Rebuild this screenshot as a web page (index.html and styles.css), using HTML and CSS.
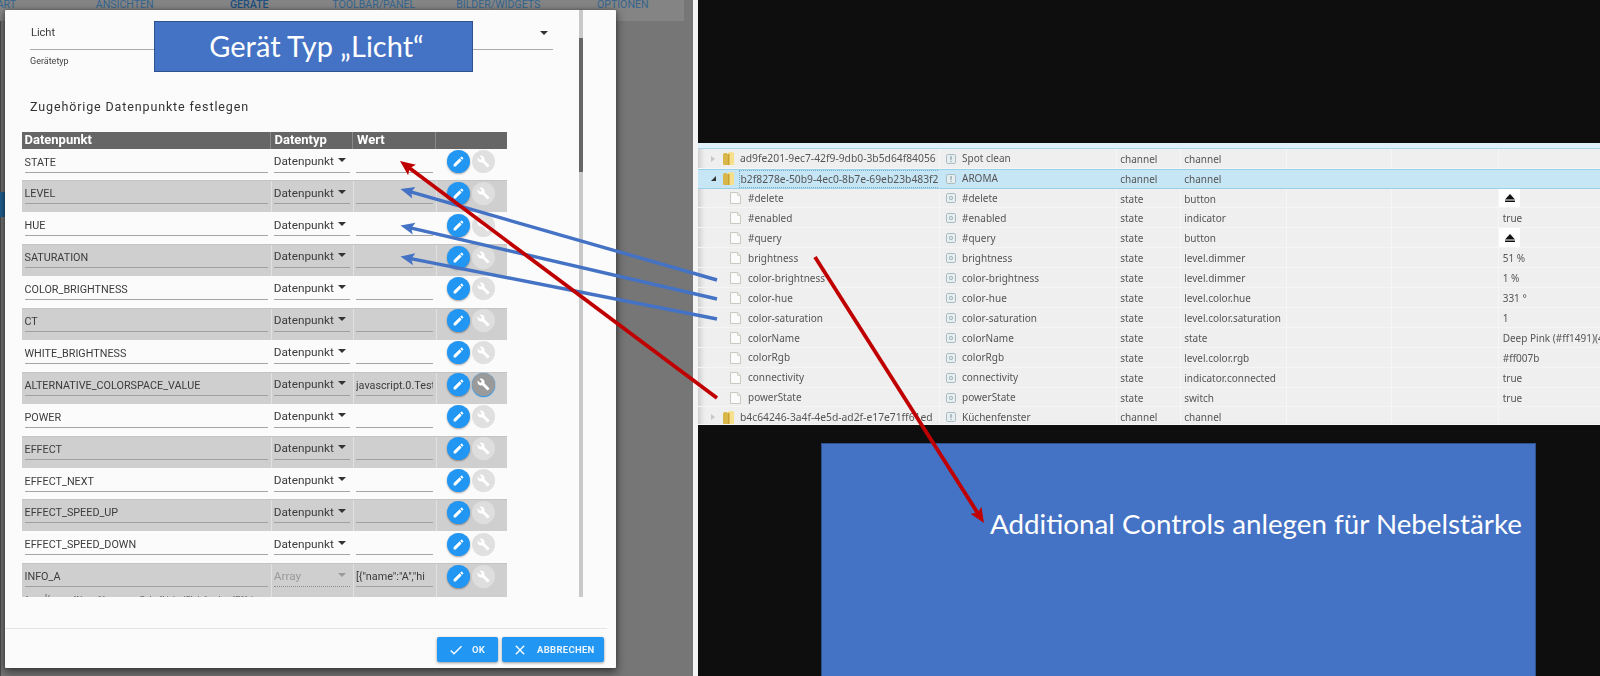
FILE: index.html
```html
<!DOCTYPE html>
<html lang="de">
<head>
<meta charset="utf-8">
<title>Gerät Typ Licht</title>
<link rel="stylesheet" href="styles.css">
</head>
<body>
<svg class="defs" width="0" height="0" aria-hidden="true">
  <symbol id="i-edit" viewBox="0 0 24 24"><path d="M3 17.25V21h3.75L17.81 9.94l-3.75-3.75L3 17.25zM20.71 7.04a.996.996 0 000-1.41l-2.34-2.34a.996.996 0 00-1.41 0l-1.83 1.83 3.75 3.75 1.83-1.83z"/></symbol>
  <symbol id="i-build" viewBox="0 0 24 24"><path d="M22.7 19l-9.1-9.1c.9-2.3.4-5-1.5-6.9-2-2-5-2.4-7.4-1.3L9 6 6 9 1.6 4.7C.4 7.1.9 10.1 2.9 12.1c1.9 1.9 4.6 2.4 6.9 1.5l9.1 9.1c.4.4 1 .4 1.4 0l2.3-2.3c.5-.4.5-1.1.1-1.4z"/></symbol>
  <symbol id="i-check" viewBox="0 0 24 24"><path d="M9 16.17L4.83 12l-1.41 1.41L9 19 21 7l-1.41-1.41z"/></symbol>
  <symbol id="i-close" viewBox="0 0 24 24"><path d="M19 6.41L17.59 5 12 10.59 6.41 5 5 6.41 10.59 12 5 17.59 6.41 19 12 13.41 17.59 19 19 17.59 13.41 12z"/></symbol>
  <symbol id="i-folder" viewBox="0 0 11 13"><path d="M0 2.5 1 1h2.5l1 1H5v11H1a1 1 0 0 1-1-1z" fill="#d9b64a"/><path d="M5 0.5 8.5 0 11 .8V12a1 1 0 0 1-1 1H5z" fill="#f6e08c"/><path d="M5 2h1.5v11H5z" fill="#c99f30"/></symbol>
  <symbol id="i-doc" viewBox="0 0 11 12"><path d="M.5.5h7l3 3v8h-10z" fill="#fbfbfb" stroke="#c9c9c0"/><path d="M7.5.5v3h3" fill="none" stroke="#d5d5cc"/></symbol>
  <symbol id="i-state" viewBox="0 0 10 10"><rect x=".5" y=".5" width="9" height="9" rx="1.2" fill="#e6eef0" stroke="#a9bcc4"/><circle cx="5" cy="5" r="1.6" fill="none" stroke="#8da4ae" stroke-width=".8"/></symbol>
  <symbol id="i-channel" viewBox="0 0 10 10"><rect x=".5" y=".5" width="9" height="9" rx="1.2" fill="#e6eef0" stroke="#a9bcc4"/><path d="M5 2.2v3.6M5 6.9v1" stroke="#6f8792" stroke-width="1"/></symbol>
  <symbol id="i-eject" viewBox="0 0 10 8"><path d="M5 0 10 5.5H0z" fill="#111"/><path d="M0 6.5h10V8H0z" fill="#111"/></symbol>
</svg>

<div class="screen">
  <section class="left">
    <nav class="tabs">
      <span>START</span><span>ANSICHTEN</span><span class="tab-on">GERÄTE</span><span>TOOLBAR/PANEL</span><span>BILDER/WIDGETS</span><span>OPTIONEN</span>
    </nav>

    <div class="dialog">
      <div class="dialog-body">
        <div class="dialog-main">
          <div class="type-field">
            <div class="type-value"><span>Licht</span><i class="caret"></i></div>
            <div class="type-label">Gerätetyp</div>
          </div>
          <h2 class="title">Zugehörige Datenpunkte festlegen</h2>

          <div class="grid">
            <div class="row head"><div>Datenpunkt</div><div>Datentyp</div><div>Wert</div><div></div></div>

            <div class="row"><div class="cell c1">STATE</div><div class="cell c2"><span>Datenpunkt</span><i class="caret"></i></div><div class="cell c3"></div><div class="acts"><button class="fab"><svg><use href="#i-edit"/></svg></button><button class="fab off"><svg><use href="#i-build"/></svg></button></div></div>
            <div class="row alt"><div class="cell c1">LEVEL</div><div class="cell c2"><span>Datenpunkt</span><i class="caret"></i></div><div class="cell c3"></div><div class="acts"><button class="fab"><svg><use href="#i-edit"/></svg></button><button class="fab off"><svg><use href="#i-build"/></svg></button></div></div>
            <div class="row"><div class="cell c1">HUE</div><div class="cell c2"><span>Datenpunkt</span><i class="caret"></i></div><div class="cell c3"></div><div class="acts"><button class="fab"><svg><use href="#i-edit"/></svg></button><button class="fab off"><svg><use href="#i-build"/></svg></button></div></div>
            <div class="row alt"><div class="cell c1">SATURATION</div><div class="cell c2"><span>Datenpunkt</span><i class="caret"></i></div><div class="cell c3"></div><div class="acts"><button class="fab"><svg><use href="#i-edit"/></svg></button><button class="fab off"><svg><use href="#i-build"/></svg></button></div></div>
            <div class="row"><div class="cell c1">COLOR_BRIGHTNESS</div><div class="cell c2"><span>Datenpunkt</span><i class="caret"></i></div><div class="cell c3"></div><div class="acts"><button class="fab"><svg><use href="#i-edit"/></svg></button><button class="fab off"><svg><use href="#i-build"/></svg></button></div></div>
            <div class="row alt"><div class="cell c1">CT</div><div class="cell c2"><span>Datenpunkt</span><i class="caret"></i></div><div class="cell c3"></div><div class="acts"><button class="fab"><svg><use href="#i-edit"/></svg></button><button class="fab off"><svg><use href="#i-build"/></svg></button></div></div>
            <div class="row"><div class="cell c1">WHITE_BRIGHTNESS</div><div class="cell c2"><span>Datenpunkt</span><i class="caret"></i></div><div class="cell c3"></div><div class="acts"><button class="fab"><svg><use href="#i-edit"/></svg></button><button class="fab off"><svg><use href="#i-build"/></svg></button></div></div>
            <div class="row alt"><div class="cell c1">ALTERNATIVE_COLORSPACE_VALUE</div><div class="cell c2"><span>Datenpunkt</span><i class="caret"></i></div><div class="cell c3">javascript.0.Test</div><div class="acts"><button class="fab"><svg><use href="#i-edit"/></svg></button><button class="fab on"><svg><use href="#i-build"/></svg></button></div></div>
            <div class="row"><div class="cell c1">POWER</div><div class="cell c2"><span>Datenpunkt</span><i class="caret"></i></div><div class="cell c3"></div><div class="acts"><button class="fab"><svg><use href="#i-edit"/></svg></button><button class="fab off"><svg><use href="#i-build"/></svg></button></div></div>
            <div class="row alt"><div class="cell c1">EFFECT</div><div class="cell c2"><span>Datenpunkt</span><i class="caret"></i></div><div class="cell c3"></div><div class="acts"><button class="fab"><svg><use href="#i-edit"/></svg></button><button class="fab off"><svg><use href="#i-build"/></svg></button></div></div>
            <div class="row"><div class="cell c1">EFFECT_NEXT</div><div class="cell c2"><span>Datenpunkt</span><i class="caret"></i></div><div class="cell c3"></div><div class="acts"><button class="fab"><svg><use href="#i-edit"/></svg></button><button class="fab off"><svg><use href="#i-build"/></svg></button></div></div>
            <div class="row alt"><div class="cell c1">EFFECT_SPEED_UP</div><div class="cell c2"><span>Datenpunkt</span><i class="caret"></i></div><div class="cell c3"></div><div class="acts"><button class="fab"><svg><use href="#i-edit"/></svg></button><button class="fab off"><svg><use href="#i-build"/></svg></button></div></div>
            <div class="row"><div class="cell c1">EFFECT_SPEED_DOWN</div><div class="cell c2"><span>Datenpunkt</span><i class="caret"></i></div><div class="cell c3"></div><div class="acts"><button class="fab"><svg><use href="#i-edit"/></svg></button><button class="fab off"><svg><use href="#i-build"/></svg></button></div></div>
            <div class="row alt"><div class="cell c1">INFO_A<div class="helper">Array [{name: "Name1", commonRole: "LinkedState", value: "P1", json:</div></div><div class="cell c2 disabled"><span>Array</span><i class="caret"></i></div><div class="cell c3 clip">[{"name":"A","hi</div><div class="acts"><button class="fab"><svg><use href="#i-edit"/></svg></button><button class="fab off"><svg><use href="#i-build"/></svg></button></div></div>
          </div>
        </div>
        <div class="track"><div class="thumb"></div></div>
      </div>

      <div class="dialog-foot">
        <button class="action ok"><svg><use href="#i-check"/></svg><span>OK</span></button>
        <button class="action cancel"><svg><use href="#i-close"/></svg><span>ABBRECHEN</span></button>
      </div>
    </div>

    <div class="note note-type">Gerät Typ „Licht“</div>
  </section>

  <div class="gutter"></div>

  <section class="right">
    <div class="objects">
      <div class="orow top"></div>
      <div class="orow"><div class="n folder"><em class="tw"></em><svg class="fo"><use href="#i-folder"/></svg>ad9fe201-9ec7-42f9-9db0-3b5d64f84056</div><div class="m"><svg><use href="#i-channel"/></svg>Spot clean</div><div>channel</div><div>channel</div><div></div><div></div><div></div></div>
      <div class="orow sel"><div class="n folder"><em class="tw open"></em><svg class="fo"><use href="#i-folder"/></svg><span class="focus">b2f8278e-50b9-4ec0-8b7e-69eb23b483f2</span></div><div class="m"><svg><use href="#i-channel"/></svg>AROMA</div><div>channel</div><div>channel</div><div></div><div></div><div></div></div>
      <div class="orow"><div class="n"><svg class="do"><use href="#i-doc"/></svg>#delete</div><div class="m"><svg><use href="#i-state"/></svg>#delete</div><div>state</div><div>button</div><div></div><div></div><div class="v"><span class="eject"><svg><use href="#i-eject"/></svg></span></div></div>
      <div class="orow"><div class="n"><svg class="do"><use href="#i-doc"/></svg>#enabled</div><div class="m"><svg><use href="#i-state"/></svg>#enabled</div><div>state</div><div>indicator</div><div></div><div></div><div class="v">true</div></div>
      <div class="orow"><div class="n"><svg class="do"><use href="#i-doc"/></svg>#query</div><div class="m"><svg><use href="#i-state"/></svg>#query</div><div>state</div><div>button</div><div></div><div></div><div class="v"><span class="eject"><svg><use href="#i-eject"/></svg></span></div></div>
      <div class="orow"><div class="n"><svg class="do"><use href="#i-doc"/></svg>brightness</div><div class="m"><svg><use href="#i-state"/></svg>brightness</div><div>state</div><div>level.dimmer</div><div></div><div></div><div class="v">51 %</div></div>
      <div class="orow"><div class="n"><svg class="do"><use href="#i-doc"/></svg>color-brightness</div><div class="m"><svg><use href="#i-state"/></svg>color-brightness</div><div>state</div><div>level.dimmer</div><div></div><div></div><div class="v">1 %</div></div>
      <div class="orow"><div class="n"><svg class="do"><use href="#i-doc"/></svg>color-hue</div><div class="m"><svg><use href="#i-state"/></svg>color-hue</div><div>state</div><div>level.color.hue</div><div></div><div></div><div class="v">331 °</div></div>
      <div class="orow"><div class="n"><svg class="do"><use href="#i-doc"/></svg>color-saturation</div><div class="m"><svg><use href="#i-state"/></svg>color-saturation</div><div>state</div><div>level.color.saturation</div><div></div><div></div><div class="v">1</div></div>
      <div class="orow"><div class="n"><svg class="do"><use href="#i-doc"/></svg>colorName</div><div class="m"><svg><use href="#i-state"/></svg>colorName</div><div>state</div><div>state</div><div></div><div></div><div class="v">Deep Pink (#ff1491)(4</div></div>
      <div class="orow"><div class="n"><svg class="do"><use href="#i-doc"/></svg>colorRgb</div><div class="m"><svg><use href="#i-state"/></svg>colorRgb</div><div>state</div><div>level.color.rgb</div><div></div><div></div><div class="v">#ff007b</div></div>
      <div class="orow"><div class="n"><svg class="do"><use href="#i-doc"/></svg>connectivity</div><div class="m"><svg><use href="#i-state"/></svg>connectivity</div><div>state</div><div>indicator.connected</div><div></div><div></div><div class="v">true</div></div>
      <div class="orow"><div class="n"><svg class="do"><use href="#i-doc"/></svg>powerState</div><div class="m"><svg><use href="#i-state"/></svg>powerState</div><div>state</div><div>switch</div><div></div><div></div><div class="v">true</div></div>
      <div class="orow"><div class="n folder"><em class="tw"></em><svg class="fo"><use href="#i-folder"/></svg>b4c64246-3a4f-4e5d-ad2f-e17e71ff61ed</div><div class="m"><svg><use href="#i-channel"/></svg>Küchenfenster</div><div>channel</div><div>channel</div><div></div><div></div><div></div></div>
    </div>
    <div class="note-box">Additional Controls anlegen für Nebelstärke</div>
  </section>
</div>

<svg class="arrows" viewBox="0 0 1600 676" aria-hidden="true">
  <defs>
    <marker id="head-blue" markerUnits="userSpaceOnUse" markerWidth="14" markerHeight="14" refX="6" refY="7" orient="auto"><path d="M14 7 0 1 3 7 0 13z" fill="#4472c4"/></marker>
    <marker id="head-red" markerUnits="userSpaceOnUse" markerWidth="15" markerHeight="15" refX="7" refY="7.5" orient="auto"><path d="M15 7.5 0 1 3 7.5 0 14z" fill="#c00000"/></marker>
  </defs>
  <line class="arrow-blue" x1="717" y1="280" x2="408.2" y2="191.2"/>
  <line class="arrow-blue" x1="717" y1="299" x2="408.3" y2="227.3"/>
  <line class="arrow-blue" x1="717" y1="319" x2="408.3" y2="258.1"/>
  <line class="arrow-red" x1="717" y1="398" x2="406.4" y2="165.8"/>
  <line class="arrow-red" x1="815" y1="257" x2="979.7" y2="516.2"/>
</svg>
</body>
</html>
```

FILE: styles.css
```css
* { box-sizing: border-box; }
html, body { margin: 0; padding: 0; height: 100%; overflow: hidden; }
body { width: 1600px; height: 676px; position: relative; font-family: Roboto, "Liberation Sans", sans-serif; background: #0e0e0e; }
.defs { position: absolute; }

.screen { display: flex; width: 1600px; height: 676px; }

/* ---------- left half: dimmed editor with dialog ---------- */
.left {
  position: relative;
  width: 693px;
  flex: none;
  overflow: hidden;
  background:
    linear-gradient(#1f6191, #1f6191) 0 192px / 5px 25px no-repeat,
    linear-gradient(90deg, #4a4a4a 0, #4a4a4a 1px, transparent 1px),
    #767676;
}
.tabs {
  display: grid;
  grid-template-columns: repeat(6, 124.5px);
  margin-left: -62px;
  width: 684px;
  height: 21px;
  overflow: hidden;
  background: #848484;
  color: #35648f;
  font-size: 10.6px;
  line-height: 9px;
  text-align: center;
  white-space: nowrap;
  box-sizing: content-box;
  padding-right: 62px;
}
.tab-on { color: #1d4f80; font-weight: 500; }

.dialog {
  position: absolute;
  left: 4.5px;
  top: 10px;
  width: 611.5px;
  height: 658px;
  background: #fbfbfb;
  border-radius: 1px;
  display: flex;
  flex-direction: column;
  box-shadow: 0 4px 10px 1px rgba(0, 0, 0, .45), 0 0 4px rgba(0, 0, 0, .3);
  color: #333;
  filter: blur(.25px);
}
.dialog-body { display: flex; height: 587px; flex: none; }
.dialog-main { width: 574.5px; flex: none; overflow: hidden; padding-top: 12px; }
.track { width: 4px; height: 587px; background: #c9c9c9; flex: none; padding-top: 28px; }
.thumb { height: 134px; background: #666; }

.type-field { margin: 0 26px 0 25.5px; }
.type-value {
  height: 27.5px;
  display: flex;
  justify-content: space-between;
  align-items: center;
  padding: 0 5px 5px 1px;
  font-size: 11px;
  border-bottom: 1px solid #aaa;
  color: #3a3a3a;
}
.type-label { margin-top: 6px; font-size: 9px; line-height: 11px; color: #444; }
.title { margin: 32px 0 0 25.5px; font-size: 12.5px; line-height: 16px; font-weight: 400; letter-spacing: .87px; color: #333; }

.caret { display: block; width: 0; height: 0; border: 4px solid transparent; border-top: 4px solid #333; border-bottom: 0; flex: none; }

.grid { margin: 17px 0 0 17px; width: 485.5px; }
.row {
  display: grid;
  grid-template-columns: 249px 82.5px 83px 71px;
  height: 31.92px;
}
.row.head {
  height: 17px;
  background: #666;
  color: #fff;
  font-size: 13px;
  font-weight: 700;
  line-height: 16px;
}
.row.head > div { padding-left: 3px; border-right: 1px solid #8a8a8a; white-space: nowrap; }
.row.head > div:nth-child(2), .row.head > div:nth-child(3) { padding-left: 4px; }
.row.head > div:last-child { border-right: 0; }
.row.alt {
  background:
    linear-gradient(90deg, transparent 249px, #e0e0e0 249px, #e0e0e0 250px, transparent 250px),
    linear-gradient(90deg, transparent 331px, #e0e0e0 331px, #e0e0e0 332px, transparent 332px),
    linear-gradient(90deg, transparent 414px, #e0e0e0 414px, #e0e0e0 415px, transparent 415px),
    #cfcfcf;
  box-shadow: inset 0 1px 0 #c4c4c4;
}

.cell {
  height: 24px;
  border-bottom: 1.5px solid #a6a6a6;
  font-size: 11.8px;
  line-height: 27px;
  color: #3c3c3c;
  white-space: nowrap;
}
.alt .cell { border-bottom-color: #a0a0a0; }
.c1 { margin: 0 2.5px 0 3px; font-size: 10.8px; }
.c2 { margin: 0 2.6px 0 3.2px; display: flex; justify-content: space-between; align-items: center; padding: 2.5px 4px 0 0; }
.c2 .caret { margin-top: -3px; }
.c3 { margin: 0 3px; overflow: hidden; font-size: 10.8px; }
.clip { overflow: hidden; }
.disabled { color: #9a9a9a; border-bottom: 1.5px dotted #8a8a8a !important; }
.disabled .caret { border-top-color: #9a9a9a; }
.helper { font-size: 8px; line-height: 9px; margin-top: 3.5px; color: #555; overflow: hidden; white-space: nowrap; }
.alt:last-child { height: 44px; }

.acts { display: flex; gap: 2px; padding: 1.3px 0 0 10.7px; align-items: flex-start; }
.fab {
  width: 23px;
  height: 23px;
  padding: 0;
  border: 0;
  border-radius: 50%;
  display: flex;
  align-items: center;
  justify-content: center;
  background: #2196f3;
  box-shadow: 0 1px 2px rgba(0, 0, 0, .35);
}
.fab svg { width: 13px; height: 13px; fill: #fff; }
.fab.off { background: #e0e0e0; box-shadow: none; }
.alt .fab.off { background: #dedede; }
.fab.on { background: #9a9a9a; box-shadow: 0 1px 1px #2196f3, 0 0 1px #2196f3; }

.dialog-foot {
  flex: 1;
  margin-top: 31px;
  margin-right: 9px;
  border-top: 1px solid #e4e4e4;
  display: flex;
  justify-content: flex-end;
  gap: 4px;
  padding: 8px 3.5px 0 0;
  align-items: flex-start;
}
.action {
  height: 25px;
  padding: 0;
  border: 0;
  border-radius: 2px;
  background: #2196f3;
  color: #e9f4fd;
  font-family: Roboto, sans-serif;
  font-size: 9.5px;
  font-weight: 700;
  letter-spacing: .3px;
  display: flex;
  align-items: center;
  box-shadow: 0 1px 3px rgba(0, 0, 0, .4);
}
.action svg { width: 16px; height: 16px; fill: #fff; flex: none; }
.ok { width: 61px; padding-left: 11px; gap: 8px; }
.cancel { width: 101.5px; padding-left: 10px; gap: 9px; }

.note-type {
  position: absolute;
  left: 154px;
  top: 21px;
  width: 319px;
  height: 51px;
  background: #4472c4;
  border: 1.5px solid #2f528f;
  color: #fff;
  font-family: Lato, "Open Sans", sans-serif;
  font-size: 29px;
  line-height: 48px;
  text-align: center;
  padding-left: 6px;
  white-space: nowrap;
}

.gutter { width: 5px; flex: none; background: #f4f4f4; }

/* ---------- right half: object browser screenshot ---------- */
.right { flex: 1; min-width: 0; background: #0e0e0e; padding-top: 143px; display: flex; flex-direction: column; height: 676px; }
.objects {
  height: 281.5px;
  flex: none;
  overflow: hidden;
  background: #efefef;
  border-bottom: 1.5px solid #f6f6f6;
  box-shadow: inset 6px 0 6px -4px rgba(0, 0, 0, .18);
  color: #555;
  font-family: "Noto Sans", "Open Sans", sans-serif;
  font-size: 10px;
  filter: blur(.3px);
}
.orow {
  display: grid;
  grid-template-columns: 242px 176.7px 64px 106px 105.3px 106.7px 1fr;
  height: 19.92px;
  line-height: 20.5px;
  border-bottom: 1px solid #f5f5f5;
  white-space: nowrap;
}
.orow > div { padding-left: 3.5px; border-right: 1px solid #f6f6f6; overflow: hidden; }
.orow > div:last-child { border-right: 0; }
.orow.top { height: 5.7px; background: #dff0f8; border-bottom: 1px solid #a9d6ea; }
.orow.sel { background: #c7e6f5; border-top: 1px solid #9ad0e8; border-bottom: 1px solid #9ad0e8; line-height: 18.5px; }
.orow.sel > div { border-right-color: transparent; }
.orow > .n { padding-left: 32px; display: flex; align-items: center; padding-top: 1px; }
.orow.sel > .n { padding-top: 0; }
.orow > .n.folder { padding-left: 12.5px; font-size: 10.3px; }
.tw { display: block; width: 0; height: 0; margin-right: 8px; border: 3.5px solid transparent; border-left: 4.5px solid #c8c8c8; border-right: 0; flex: none; }
.tw.open { border: 0; border-bottom: 5px solid #333; border-left: 5px solid transparent; margin-right: 7.5px; }
.fo { width: 11px; height: 13px; margin-right: 6.5px; flex: none; }
.do { width: 11px; height: 12px; margin-right: 7px; flex: none; }
.focus { outline: 1px dotted #6fb0cf; padding: 0 1px; line-height: 16px; margin-left: -1px; }
.orow > .m { padding-left: 6px; display: flex; align-items: center; padding-top: 1px; }
.orow.sel > .m { padding-top: 0; }
.m svg { width: 10px; height: 10px; margin-right: 6px; flex: none; }
.orow > .v { padding-left: 4px; border: 0; }
.eject { display: flex; width: 21px; height: 19px; margin-left: -3.5px; background: #fff; align-items: center; justify-content: center; }
.eject svg { width: 10px; height: 8px; }

.note-box {
  margin: 18px 0 0 123px;
  width: 715px;
  flex: 1;
  background: #4472c4;
  border: 1.5px solid #2f528f;
  border-bottom: 0;
  color: #fff;
  font-family: Lato, "Open Sans", sans-serif;
  font-size: 27.75px;
  line-height: 34px;
  padding: 63px 0 0 168px;
  white-space: nowrap;
}

/* ---------- arrows lying over both halves ---------- */
.arrows { position: absolute; left: 0; top: 0; width: 1600px; height: 676px; pointer-events: none; }
.arrow-blue { stroke: #4472c4; stroke-width: 3.4; marker-end: url(#head-blue); }
.arrow-red { stroke: #c00000; stroke-width: 3.8; marker-end: url(#head-red); }
```
